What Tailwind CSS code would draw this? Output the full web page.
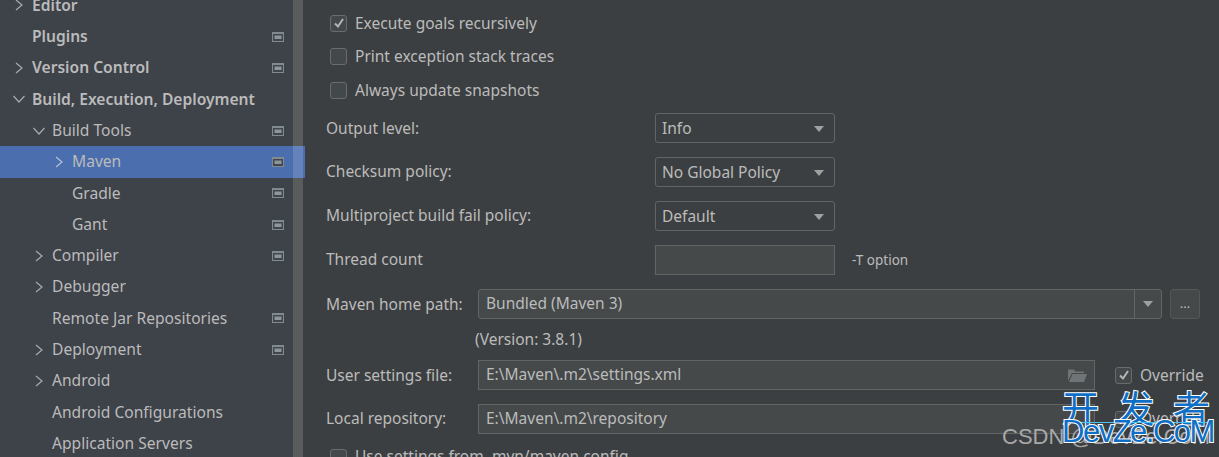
<!DOCTYPE html>
<html lang="en">
<head>
    <meta charset="UTF-8">
    <title>Settings - Maven</title>
    <script src="https://cdn.jsdelivr.net/npm/@tailwindcss/browser@4"></script>
</head>
<body class="bg-[#3c3f41] text-[#bbbbbb] text-[15.5px] font-['Noto_Sans','Open_Sans',sans-serif] overflow-hidden">
    <!-- chevrons and the little project icon, reused through <use> -->
    <svg class="hidden">
        <symbol id="right" viewBox="0 0 10 12"><path d="M2 1 8 6 2 11" fill="none" stroke="currentColor" stroke-width="1.2"/></symbol>
        <symbol id="down" viewBox="0 0 12 10"><path d="M.5 2 6 8 11.5 2" fill="none" stroke="currentColor" stroke-width="1.2"/></symbol>
        <symbol id="proj" viewBox="0 0 12 10"><path d="M0 0h12v10H0z" fill="#7f8b91"/><path d="M1 2h10v7H1z" fill="#43474d"/><path d="M2.5 3.5h7v3.5h-7z" fill="#8c979d"/></symbol>
    </svg>

    <div class="flex h-[457px] w-[1219px] relative overflow-hidden">
        <!-- settings tree -->
        <aside class="relative w-[304px] shrink-0 h-full text-[15.6px]">
            <div class="absolute inset-y-0 left-0 w-[293px] bg-[#3e4249]"></div>
            <div class="relative -mt-[10.2px] w-[305px]">
                <div class="flex items-center h-[31.3px] pl-3 font-semibold"><svg class="w-[20px] h-3 text-[#a8abae]"><use href="#right" width="10" height="12" x="2"/></svg><span>Editor</span></div>
                <div class="flex items-center h-[31.3px] pl-3 pr-[21px] font-semibold"><span class="w-5"></span><span>Plugins</span><svg class="ml-auto w-3 h-[10px]"><use href="#proj"/></svg></div>
                <div class="flex items-center h-[31.3px] pl-3 pr-[21px] font-semibold"><svg class="w-[20px] h-3 text-[#a8abae]"><use href="#right" width="10" height="12" x="2"/></svg><span>Version Control</span><svg class="ml-auto w-3 h-[10px]"><use href="#proj"/></svg></div>
                <div class="flex items-center h-[31.3px] pl-3 font-semibold"><svg class="w-[20px] h-3 text-[#a8abae]"><use href="#down" width="12" height="10" x="1" y="1"/></svg><span>Build, Execution, Deployment</span></div>
                <div class="flex items-center h-[31.3px] pl-8 pr-[21px]"><svg class="w-[20px] h-3 text-[#a8abae]"><use href="#down" width="12" height="10" x="1" y="1"/></svg><span>Build Tools</span><svg class="ml-auto w-3 h-[10px]"><use href="#proj"/></svg></div>
                <div class="flex items-center h-[31.3px] pl-[52px] pr-[21px] bg-[#4b6eaf]"><svg class="w-[20px] h-3 text-[#b4c0d6]"><use href="#right" width="10" height="12" x="2"/></svg><span>Maven</span><svg class="ml-auto w-3 h-[10px]"><use href="#proj"/></svg></div>
                <div class="flex items-center h-[31.3px] pl-[72px] pr-[21px]"><span>Gradle</span><svg class="ml-auto w-3 h-[10px]"><use href="#proj"/></svg></div>
                <div class="flex items-center h-[31.3px] pl-[72px] pr-[21px]"><span>Gant</span><svg class="ml-auto w-3 h-[10px]"><use href="#proj"/></svg></div>
                <div class="flex items-center h-[31.3px] pl-8 pr-[21px]"><svg class="w-[20px] h-3 text-[#a8abae]"><use href="#right" width="10" height="12" x="2"/></svg><span>Compiler</span><svg class="ml-auto w-3 h-[10px]"><use href="#proj"/></svg></div>
                <div class="flex items-center h-[31.3px] pl-8"><svg class="w-[20px] h-3 text-[#a8abae]"><use href="#right" width="10" height="12" x="2"/></svg><span>Debugger</span></div>
                <div class="flex items-center h-[31.3px] pl-[52px] pr-[21px]"><span>Remote Jar Repositories</span><svg class="ml-auto w-3 h-[10px]"><use href="#proj"/></svg></div>
                <div class="flex items-center h-[31.3px] pl-8 pr-[21px]"><svg class="w-[20px] h-3 text-[#a8abae]"><use href="#right" width="10" height="12" x="2"/></svg><span>Deployment</span><svg class="ml-auto w-3 h-[10px]"><use href="#proj"/></svg></div>
                <div class="flex items-center h-[31.3px] pl-8"><svg class="w-[20px] h-3 text-[#a8abae]"><use href="#right" width="10" height="12" x="2"/></svg><span>Android</span></div>
                <div class="flex items-center h-[31.3px] pl-[52px]"><span>Android Configurations</span></div>
                <div class="flex items-center h-[31.3px] pl-[52px]"><span>Application Servers</span></div>
            </div>
            <!-- scrollbar lies over the selected row -->
            <div class="absolute inset-y-0 left-[293px] w-[10px] bg-white/15"></div>
        </aside>

        <!-- maven form -->
        <main class="flex-1 pl-[22px]">
            <div class="flex flex-col pt-[6px]">
                <label class="flex items-center h-[34px] pl-1 gap-2"><span class="flex items-center justify-center w-[17px] h-[17px] rounded-[3px] border border-[#6b6b6b] bg-[#43494a]"><svg class="w-3 h-3" viewBox="0 0 12 12"><path d="M2 6.5 5 9.5 10 2" fill="none" stroke="#b5b5b5" stroke-width="2"/></svg></span><span class="pt-px">Execute goals recursively</span></label>
                <label class="flex items-center h-[33px] pl-1 gap-2"><span class="w-[17px] h-[17px] rounded-[3px] border border-[#6b6b6b] bg-[#43494a]"></span>Print exception stack traces</label>
                <label class="flex items-center h-[34px] pl-1 gap-2"><span class="w-[17px] h-[17px] rounded-[3px] border border-[#6b6b6b] bg-[#43494a]"></span><span class="pt-px">Always update snapshots</span></label>

                <div class="flex items-center h-[30px] mt-[6px]"><span class="w-[329px] pt-px">Output level:</span>
                    <div class="flex items-center justify-between w-[180px] h-[30px] pt-[2px] pl-[6px] pr-[10px] rounded-[3px] border border-[#646464]">Info<span class="w-0 h-0 border-x-[5px] border-x-transparent border-t-[6px] border-t-[#a0a0a0]"></span></div>
                </div>
                <div class="flex items-center h-[30px] mt-[14px]"><span class="w-[329px]">Checksum policy:</span>
                    <div class="flex items-center justify-between w-[180px] h-[30px] pt-[2px] pl-[6px] pr-[10px] rounded-[3px] border border-[#646464]">No Global Policy<span class="w-0 h-0 border-x-[5px] border-x-transparent border-t-[6px] border-t-[#a0a0a0]"></span></div>
                </div>
                <div class="flex items-center h-[30px] mt-[14px]"><span class="w-[329px]">Multiproject build fail policy:</span>
                    <div class="flex items-center justify-between w-[180px] h-[30px] pt-px pl-[6px] pr-[10px] rounded-[3px] border border-[#646464]">Default<span class="w-0 h-0 border-x-[5px] border-x-transparent border-t-[6px] border-t-[#a0a0a0]"></span></div>
                </div>
                <div class="flex items-center h-[30px] mt-[14px]"><span class="w-[329px]">Thread count</span>
                    <div class="w-[180px] h-[30px] bg-[#45494a] border border-[#646464]"></div>
                    <span class="ml-[17px] text-[13.5px]">-T option</span>
                </div>

                <div class="flex items-center h-[30px] mt-[14px]"><span class="w-[152px] pt-px">Maven home path:</span>
                    <div class="flex items-center w-[684px] h-[30px] pl-[7px] rounded-[3px] bg-[#45494a] border border-[#646464]"><span class="flex-1">Bundled (Maven 3)</span>
                        <span class="flex items-center justify-center w-[27px] h-full border-l border-[#646464]"><span class="w-0 h-0 border-x-[5px] border-x-transparent border-t-[6px] border-t-[#a0a0a0]"></span></span>
                    </div>
                    <div class="flex items-center justify-center w-[30px] h-[30px] ml-2 rounded-[3px] bg-[#45494a] border border-[#555859] text-[13px]">...</div>
                </div>
                <div class="h-[41px] flex items-center pl-[149px]">(Version: 3.8.1)</div>

                <div class="flex items-center h-[30px]"><span class="w-[152px] pt-px">User settings file:</span>
                    <div class="flex items-center justify-between w-[617px] h-[30px] pb-px pl-[7px] pr-[7px] bg-[#45494a] border border-[#646464]">E:\Maven\.m2\settings.xml
                        <svg class="w-[19px] h-[14px]" viewBox="0 0 19 14"><path d="M0 1.5h6l1.5 2H16V5H4L0 13z" fill="#6f7577"/><path d="M4.5 6H19l-3 8H1z" fill="#6f7577"/></svg>
                    </div>
                    <label class="flex items-center gap-2 ml-5"><span class="flex items-center justify-center w-[17px] h-[17px] rounded-[3px] border border-[#6b6b6b] bg-[#43494a]"><svg class="w-3 h-3" viewBox="0 0 12 12"><path d="M2 6.5 5 9.5 10 2" fill="none" stroke="#b5b5b5" stroke-width="2"/></svg></span><span class="pt-px">Override</span></label>
                </div>
                <div class="flex items-center h-[30px] mt-[14px]"><span class="w-[152px]">Local repository:</span>
                    <div class="flex items-center w-[617px] h-[30px] pb-px pl-[7px] bg-[#45494a] border border-[#646464]">E:\Maven\.m2\repository</div>
                    <label class="flex items-center gap-2 ml-5"><span class="flex items-center justify-center w-[17px] h-[17px] rounded-[3px] border border-[#6b6b6b] bg-[#43494a]"><svg class="w-3 h-3" viewBox="0 0 12 12"><path d="M2 6.5 5 9.5 10 2" fill="none" stroke="#b5b5b5" stroke-width="2"/></svg></span>Override</label>
                </div>
                <label class="flex items-center h-[34px] mt-[6px] pl-1 gap-2"><span class="w-[17px] h-[17px] rounded-[3px] border border-[#6b6b6b] bg-[#43494a]"></span>Use settings from .mvn/maven.config</label>
            </div>
        </main>

        <!-- site watermark over the bottom right corner -->
        <div class="absolute left-[1002px] top-[423px] text-[22px] leading-7 text-[#a8a8a8] font-['Liberation_Sans',sans-serif] whitespace-nowrap">CSDN @DevZe.CoM</div>
        <div class="absolute left-[1062px] top-[387px] w-[148px] flex justify-between text-[37px] leading-10 text-[#0f6fc6] font-['Noto_Sans_CJK_SC',sans-serif] [-webkit-text-stroke:2px_white] [paint-order:stroke_fill]"><span>开</span><span>发</span><span>者</span></div>
        <div class="absolute left-[1063px] top-[422px] w-[146px] h-px bg-[#4cc2f0]"></div>
        <div class="absolute left-[1062px] top-[416px] text-[31px] leading-8 tracking-[-1.5px] text-[#0f6fc6] font-['Liberation_Sans',sans-serif] [-webkit-text-stroke:2px_white] [paint-order:stroke_fill] whitespace-nowrap">DevZe.CoM</div>
    </div>
</body>
</html>
